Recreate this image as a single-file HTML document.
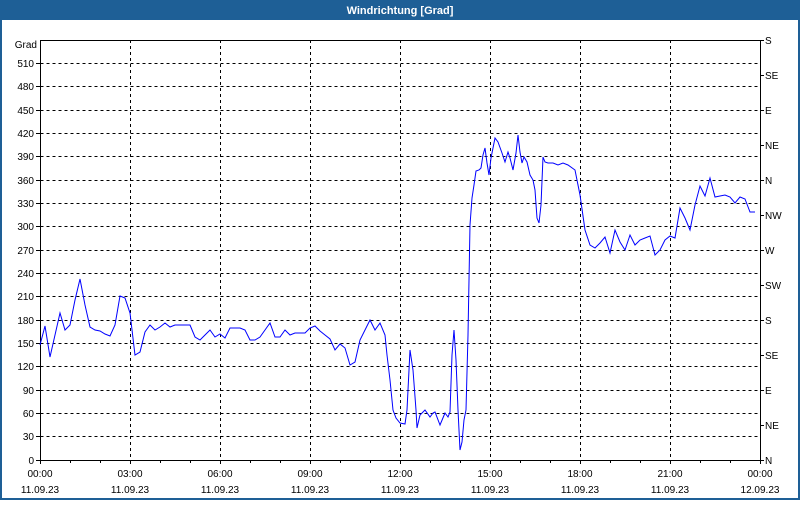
<!DOCTYPE html>
<html><head><style>
body{margin:0;width:800px;height:500px;overflow:hidden;background:#fff;font-family:"Liberation Sans",sans-serif}
</style></head><body>
<svg width="800" height="500" xmlns="http://www.w3.org/2000/svg" font-family="Liberation Sans, sans-serif" font-size="10">
<rect x="0" y="0" width="800" height="500" fill="#1e5f96"/>
<rect x="2" y="20" width="796" height="478" fill="#fff"/>
<text x="400" y="14" fill="#fff" font-weight="bold" font-size="11" text-anchor="middle">Windrichtung [Grad]</text>
<g stroke="#000" stroke-dasharray="3,3" stroke-width="1">
<path d="M40.5 63.5H760M40.5 86.5H760M40.5 110.5H760M40.5 133.5H760M40.5 156.5H760M40.5 180.5H760M40.5 203.5H760M40.5 226.5H760M40.5 250.5H760M40.5 273.5H760M40.5 296.5H760M40.5 320.5H760M40.5 343.5H760M40.5 366.5H760M40.5 390.5H760M40.5 413.5H760M40.5 436.5H760"/>
<path d="M130.5 40V460M220.5 40V460M310.5 40V460M400.5 40V460M490.5 40V460M580.5 40V460M670.5 40V460"/>
</g>
<path d="M40.5 40.5V460.5H760.5V40.5" fill="none" stroke="#000"/>
<path d="M40 40.5H760" stroke="#000"/>
<g stroke="#000">
<path d="M760 40.5h4M760 75.5h4M760 110.5h4M760 145.5h4M760 180.5h4M760 215.5h4M760 250.5h4M760 285.5h4M760 320.5h4M760 355.5h4M760 390.5h4M760 425.5h4M760 460.5h4"/>
<path d="M36 63.5h4M36 86.5h4M36 110.5h4M36 133.5h4M36 156.5h4M36 180.5h4M36 203.5h4M36 226.5h4M36 250.5h4M36 273.5h4M36 296.5h4M36 320.5h4M36 343.5h4M36 366.5h4M36 390.5h4M36 413.5h4M36 436.5h4M36 460.5h4"/>
<path d="M40.5 460v4M70.5 460v3M100.5 460v3M130.5 460v4M160.5 460v3M190.5 460v3M220.5 460v4M250.5 460v3M280.5 460v3M310.5 460v4M340.5 460v3M370.5 460v3M400.5 460v4M430.5 460v3M460.5 460v3M490.5 460v4M520.5 460v3M550.5 460v3M580.5 460v4M610.5 460v3M640.5 460v3M670.5 460v4M700.5 460v3M730.5 460v3M760.5 460v4"/>
</g>
<g text-anchor="end" fill="#000">
<text x="37" y="48">Grad</text>
<text x="34" y="67">510</text><text x="34" y="90">480</text><text x="34" y="114">450</text><text x="34" y="137">420</text><text x="34" y="160">390</text><text x="34" y="184">360</text><text x="34" y="207">330</text><text x="34" y="230">300</text><text x="34" y="254">270</text><text x="34" y="277">240</text><text x="34" y="300">210</text><text x="34" y="324">180</text><text x="34" y="347">150</text><text x="34" y="370">120</text><text x="34" y="394">90</text><text x="34" y="417">60</text><text x="34" y="440">30</text><text x="34" y="464">0</text>
</g>
<g fill="#000">
<text x="765" y="44">S</text><text x="765" y="79">SE</text><text x="765" y="114">E</text><text x="765" y="149">NE</text><text x="765" y="184">N</text><text x="765" y="219">NW</text><text x="765" y="254">W</text><text x="765" y="289">SW</text><text x="765" y="324">S</text><text x="765" y="359">SE</text><text x="765" y="394">E</text><text x="765" y="429">NE</text><text x="765" y="464">N</text>
</g>
<g text-anchor="middle" fill="#000">
<text x="40" y="477">00:00</text><text x="40" y="493">11.09.23</text>
<text x="130" y="477">03:00</text><text x="130" y="493">11.09.23</text>
<text x="220" y="477">06:00</text><text x="220" y="493">11.09.23</text>
<text x="310" y="477">09:00</text><text x="310" y="493">11.09.23</text>
<text x="400" y="477">12:00</text><text x="400" y="493">11.09.23</text>
<text x="490" y="477">15:00</text><text x="490" y="493">11.09.23</text>
<text x="580" y="477">18:00</text><text x="580" y="493">11.09.23</text>
<text x="670" y="477">21:00</text><text x="670" y="493">11.09.23</text>
<text x="760" y="477">00:00</text><text x="760" y="493">12.09.23</text>
</g>
<polyline fill="none" stroke="#0000ff" stroke-width="1" points="40,345 45,326 50,357 55,335 60,313 65,330 70,325 75,300 80,279 85,305 90,327 95,330 100,331 105,334 110,336 115,325 120,296 125,298 130,313 135,355 140,352 145,332 150,325 155,330 160,327 165,323 170,327 175,325 180,325 185,325 190,325 195,337 200,340 205,335 210,330 215,337 220,334 225,338 230,328 235,328 240,328 245,330 250,340 255,340 260,337 265,330 270,323 275,337 280,337 285,330 290,335 295,333 300,333 305,333 310,328 315,326 320,331 325,335 330,339 335,350 340,344 345,348 350,365 355,362 360,340 365,330 370,320 375,330 380,323 385,335 387,355 390,380 393,410 396,418 400,423 405,424 407,410 408,390 410,350 413,370 416,410 417,428 420,415 425,410 430,417 433,413 435,412 440,425 445,413 448,417 450,412 452,355 454,330 456,360 458,410 460,450 462,442 464,420 466,410 468,335 470,225 472,198 474,185 476,171 479,170 481,168 483,155 485,148 487,163 489,175 491,158 495,138 498,142 502,153 505,162 508,152 510,158 513,170 516,153 518,135 520,152 522,163 524,157 527,162 530,175 533,180 535,190 537,218 539,223 541,205 543,157 545,162 548,163 553,163 558,165 563,163 568,165 575,170 580,195 585,230 590,245 595,248 600,243 605,237 610,253 615,230 620,242 625,250 630,235 635,245 640,240 645,238 650,236 655,255 660,250 665,240 670,236 675,238 680,208 685,218 690,230 695,205 700,186 705,196 710,178 715,197 720,196 725,195 730,197 735,203 740,197 745,199 750,212 755,212"/>
</svg>
</body></html>
